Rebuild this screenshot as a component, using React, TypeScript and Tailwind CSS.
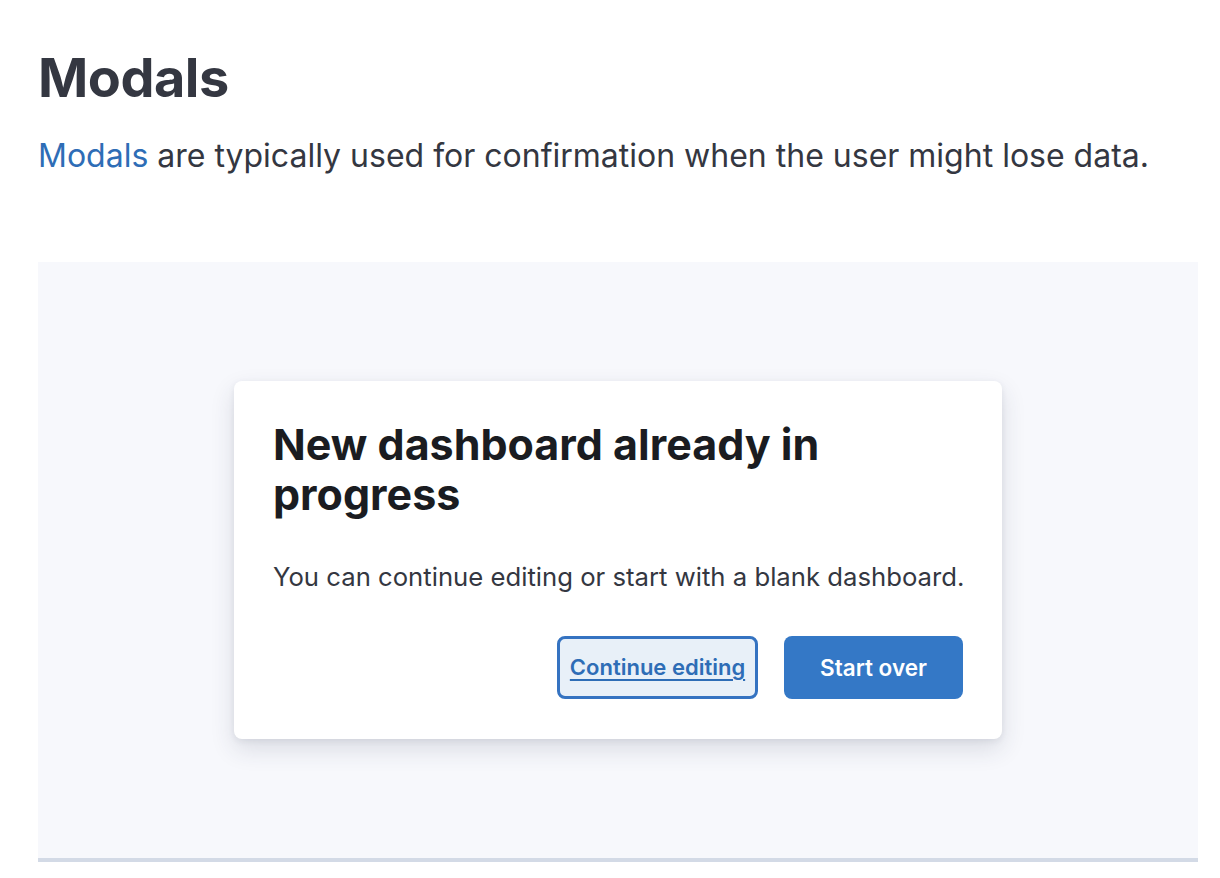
export default function App() {
  return (
    <div
      className="min-h-screen bg-white px-[38px] pt-[46px] text-[#343741]"
      style={{ fontFamily: "Inter, 'Noto Sans', sans-serif" }}
    >
      <h1 className="text-[54px] font-bold leading-[64px] tracking-[-0.5px] text-[#343741]">Modals</h1>
      <p className="mt-[24px] text-[32px] leading-[44px]">
        <a className="text-[#2e6db6]">Modals</a> are typically used for confirmation when the user might lose data.
      </p>

      <div className="mt-[84px] flex h-[600px] w-[1160px] items-center justify-center border-b-4 border-[#d3dae6] bg-[#f7f8fc]">
        <div className="w-[768px] rounded-[8px] bg-white px-[39px] pb-[40px] pt-[38px] shadow-[0_10px_24px_rgba(40,50,80,0.14),0_2px_6px_rgba(40,50,80,0.08)]">
          <h2 className="text-[43px] font-bold leading-[50px] text-[#1a1c21]">
            New dashboard already in progress
          </h2>
          <p className="mt-[40px] whitespace-nowrap text-[25.7px] leading-[36px] text-[#343741]">
            You can continue editing or start with a blank dashboard.
          </p>
          <div className="mt-[41px] flex justify-end gap-[26px]">
            <button className="h-[63px] w-[201px] rounded-[8px] border-[3px] border-[#3573c1] bg-[#e8f0f8] text-[22px] font-semibold text-[#2e6db6] underline underline-offset-[4px]">
              Continue editing
            </button>
            <button className="h-[63px] w-[179px] rounded-[8px] bg-[#3478c6] text-[22.5px] font-semibold text-white">
              Start over
            </button>
          </div>
        </div>
      </div>
    </div>
  );
}
